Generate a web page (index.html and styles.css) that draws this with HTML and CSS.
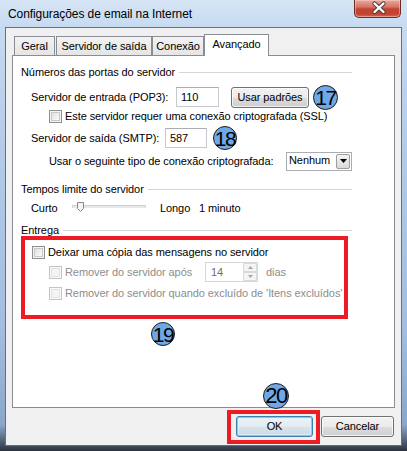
FILE: index.html
```html
<!DOCTYPE html>
<html lang="pt">
<head>
<meta charset="utf-8">
<title>Configurações de email na Internet</title>
<link rel="stylesheet" href="styles.css">
</head>
<body>
<div class="window">
  <div class="titlebar">
    <span class="title">Configurações de email na Internet</span>
    <div class="close">
      <svg width="47" height="18" viewBox="0 0 47 18">
        <path d="M19.5 4.5 L28.5 13 M28.5 4.5 L19.5 13" stroke="#4a3a3a" stroke-width="4.2" stroke-linecap="round"/>
        <path d="M19.5 4.5 L28.5 13 M28.5 4.5 L19.5 13" stroke="#ffffff" stroke-width="2.4" stroke-linecap="round"/>
      </svg>
    </div>
  </div>
  <div class="client">
    <div class="tabs">
      <div class="tab t1">Geral</div>
      <div class="tab t2">Servidor de saída</div>
      <div class="tab t3">Conexão</div>
      <div class="tab t4 sel">Avançado</div>
    </div>
    <div class="panel">
      <div class="head h1"><span>Números das portas do servidor</span></div>
      <div class="row r-pop">
        <span class="lbl w-pop">Servidor de entrada (POP3):</span>
        <div class="input in-pop">110</div>
        <div class="btn btn-std">Usar padrões</div>
        <div class="badge b17">17</div>
      </div>
      <div class="row r-ssl">
        <span class="cb"></span>
        <span class="lbl">Este servidor requer uma conexão criptografada (SSL)</span>
      </div>
      <div class="row r-smtp">
        <span class="lbl w-smtp">Servidor de saída (SMTP):</span>
        <div class="input in-smtp">587</div>
        <div class="badge b18">18</div>
      </div>
      <div class="row r-sel">
        <span class="lbl w-sel">Usar o seguinte tipo de conexão criptografada:</span>
        <div class="select">
          <span class="sel-text">Nenhum</span>
          <span class="sel-btn"><svg width="7" height="4" viewBox="0 0 7 4"><path d="M0 0 H7 L3.5 4 Z" fill="#000"/></svg></span>
        </div>
      </div>

      <div class="head h2"><span>Tempos limite do servidor</span></div>
      <div class="row r-time">
        <span class="lbl w-curto">Curto</span>
        <div class="slider">
          <span class="track"></span>
          <svg class="thumb" width="7" height="10" viewBox="0 0 7 10"><path d="M0.5 0.5 H6.5 V6.5 L3.5 9.5 L0.5 6.5 Z" fill="#f3f3f3" stroke="#8a8a8a"/></svg>
        </div>
        <span class="lbl w-longo">Longo</span>
        <span class="lbl">1 minuto</span>
      </div>

      <div class="head h3"><span>Entrega</span></div>
      <div class="redbox">
        <div class="row r-keep">
          <span class="cb"></span>
          <span class="lbl">Deixar uma cópia das mensagens no servidor</span>
        </div>
        <div class="row r-after">
          <span class="cb dis"></span>
          <span class="lbl dis-text w-after">Remover do servidor após</span>
          <div class="spin">
            <span class="spin-text">14</span>
            <span class="spin-btns">
              <span class="sb"><svg width="5" height="3" viewBox="0 0 5 3"><path d="M0 3 H5 L2.5 0 Z" fill="#a8a8a8"/></svg></span>
              <span class="sb"><svg width="5" height="3" viewBox="0 0 5 3"><path d="M0 0 H5 L2.5 3 Z" fill="#a8a8a8"/></svg></span>
            </span>
          </div>
          <span class="lbl dis-text dias">dias</span>
        </div>
        <div class="row r-when">
          <span class="cb dis"></span>
          <span class="lbl dis-text">Remover do servidor quando excluído de 'Itens excluídos'</span>
        </div>
      </div>

      <div class="badge b19">19</div>
      <div class="badge b20">20</div>
    </div>
    <div class="buttons">
      <div class="redbox-ok">
        <div class="btn btn-ok">OK</div>
      </div>
      <div class="btn btn-cancel">Cancelar</div>
    </div>
  </div>
</div>
</body>
</html>
```

FILE: styles.css
```css
html, body {
  margin: 0;
  padding: 0;
}
body {
  width: 407px;
  height: 451px;
  overflow: hidden;
  font-family: "Liberation Sans", Arial, sans-serif;
  font-size: 11px;
  letter-spacing: -0.08px;
  color: #000;
  background: linear-gradient(to bottom, #d6e5f5 0px, #c6daf0 28px, #b3cbe8 150px, #a2bde0 330px, #8aa6cb 425px, #3e4a5b 446px, #2b323d 451px);
}
.window {
  height: 451px;
  display: flex;
  flex-direction: column;
}

/* title bar */
.titlebar {
  height: 27px;
  display: flex;
  align-items: flex-start;
  padding: 0 6px 0 8px;
  flex: none;
}
.title {
  margin-top: 6px;
  line-height: 16px;
  font-size: 12px;
  color: #000;
}
.close {
  margin-left: auto;
  width: 47px;
  height: 18px;
  box-sizing: border-box;
  border: 1px solid #6b2c24;
  border-top: none;
  border-radius: 0 0 5px 5px;
  background: linear-gradient(to bottom, #e9a99e 0px, #d67265 7px, #c4412f 9px, #c3432f 14px, #d9765a 18px);
  box-shadow: inset 0 0 0 1px rgba(255, 220, 210, 0.45);
}
.close svg {
  display: block;
  margin-top: -1px;
}

/* client */
.client {
  flex: 1;
  margin: 0 5px 5px 5px;
  border: 1px solid #5d7189;
  background: #f0f0f0;
  display: flex;
  flex-direction: column;
}

/* tabs */
.tabs {
  display: flex;
  align-items: flex-end;
  height: 22px;
  margin-top: 6px;
  padding-left: 8px;
  flex: none;
}
.tab {
  height: 20px;
  box-sizing: border-box;
  border: 1px solid #898c95;
  border-bottom: none;
  background: linear-gradient(to bottom, #f3f3f3, #e4e4e4);
  line-height: 18px;
  text-align: center;
  color: #000;
}
.t1 { width: 41px; }
.t2 { width: 96px; margin-left: 1px; }
.t3 { width: 52px; }
.t4 { width: 65px; }
.tab.sel {
  height: 22px;
  background: #fff;
  position: relative;
  z-index: 2;
  line-height: 18px;
}

/* panel */
.panel {
  flex: 1;
  margin: -1px 6px 0 6px;
  border: 1px solid #898c95;
  background: #fff;
  position: relative;
  padding: 8px 0 0 8px;
  box-sizing: border-box;
  min-height: 0;
}
.head {
  display: flex;
  align-items: center;
  width: 331px;
  height: 16px;
  line-height: 16px;
}
.head::after {
  content: "";
  flex: 1;
  height: 0;
  border-top: 1px solid #d5d5d5;
  margin-left: 4px;
}
.row {
  display: flex;
  align-items: center;
}
.lbl {
  white-space: nowrap;
  line-height: 15px;
}
.r-pop { height: 24px; margin-top: 5px; padding-left: 10px; }
.w-pop { width: 145px; flex: none; }
.r-ssl { height: 14px; padding-left: 28px; }
.r-smtp { height: 24px; margin-top: 3px; padding-left: 10px; }
.w-smtp { width: 134px; flex: none; }
.r-sel { height: 20px; margin-top: 1px; padding-left: 28px; }
.w-sel { width: 237px; flex: none; }
.h2 { margin-top: 10px; }
.r-time { height: 16px; margin-top: 3px; padding-left: 10px; }
.w-curto { width: 41px; flex: none; }
.w-longo { width: 39px; flex: none; margin-left: 14px; }
.h3 { margin-top: 7px; height: 14px; }

/* inputs */
.input {
  height: 20px;
  box-sizing: border-box;
  border: 1px solid #c5c9d0;
  border-top-color: #abadb3;
  background: #fff;
  padding-left: 4px;
  line-height: 18px;
  flex: none;
}
.in-pop { width: 43px; }
.in-smtp { width: 42px; }

/* buttons */
.btn {
  height: 21px;
  box-sizing: border-box;
  border: 1px solid #707070;
  border-radius: 3px;
  background: linear-gradient(to bottom, #f2f2f2 0%, #ebebeb 50%, #dddddd 51%, #cfcfcf 100%);
  box-shadow: inset 0 0 0 1px rgba(255, 255, 255, 0.7);
  text-align: center;
  line-height: 19px;
  flex: none;
}
.btn-std {
  width: 78px;
  margin-left: 12px;
}
.btn-ok {
  width: 77px;
  border-color: #3c7fb1;
  background: linear-gradient(to bottom, #eef3f7 0%, #e3ebf1 50%, #d7e2ea 51%, #cfdbe5 100%);
  box-shadow: inset 0 0 0 1px #6fd3f5, inset 0 0 0 2px rgba(220, 245, 255, 0.6);
}
.btn-cancel {
  width: 73px;
  margin-top: 6px;
}

/* checkbox */
.cb {
  width: 13px;
  height: 13px;
  box-sizing: border-box;
  border: 1px solid #8e8f8f;
  background: linear-gradient(135deg, #d9d9d9 0%, #f2f2f2 60%, #fbfbfb 100%);
  box-shadow: inset 0 0 0 1px #f4f4f4, inset 0 0 0 2px #c8c8c8;
  margin-right: 3px;
  flex: none;
}
.cb.dis {
  border-color: #c4c4c4;
  background: #f4f4f4;
  box-shadow: inset 0 0 0 1px #fafafa, inset 0 0 0 2px #e2e2e2;
}
.dis-text { color: #8d8d8d; }

/* select */
.select {
  width: 66px;
  height: 19px;
  box-sizing: border-box;
  border: 1px solid #a9adb4;
  background: #fff;
  display: flex;
  align-items: stretch;
  flex: none;
}
.sel-text {
  flex: 1;
  padding-left: 2px;
  line-height: 15px;
}
.sel-btn {
  width: 14px;
  box-sizing: border-box;
  margin: 1px 1px 1px 0;
  border: 1px solid #9c9c9c;
  border-radius: 2px;
  background: linear-gradient(to bottom, #f4f4f4, #dadada);
  display: flex;
  align-items: center;
  justify-content: center;
}

/* slider */
.slider {
  width: 74px;
  height: 16px;
  position: relative;
  flex: none;
  display: flex;
  align-items: center;
}
.track {
  display: block;
  width: 74px;
  height: 3px;
  box-sizing: border-box;
  background: #e7eaea;
  border: 1px solid #d0d0d0;
  border-bottom-color: #e8e8e8;
  margin-top: -3px;
}
.thumb {
  position: absolute;
  left: 5px;
  top: 2px;
}

/* red box */
.redbox {
  width: 327px;
  height: 83px;
  box-sizing: border-box;
  border: 4px solid #ed1c24;
  margin-top: -1px;
  padding-top: 5px;
}
.r-keep { height: 14px; padding-left: 7px; }
.r-after { height: 20px; margin-top: 3px; padding-left: 24px; }
.w-after { width: 140px; flex: none; }
.r-when { height: 14px; margin-top: 4px; padding-left: 24px; }
.spin {
  width: 53px;
  height: 20px;
  box-sizing: border-box;
  border: 1px solid #d7d7d7;
  background: #fff;
  display: flex;
  flex: none;
}
.spin-text {
  flex: 1;
  padding-left: 5px;
  line-height: 18px;
  color: #6d6d6d;
}
.spin-btns {
  width: 14px;
  display: flex;
  flex-direction: column;
}
.sb {
  flex: 1;
  box-sizing: border-box;
  border: 1px solid #d9d9d9;
  border-radius: 1px;
  background: #f4f4f4;
  display: flex;
  align-items: center;
  justify-content: center;
}
.dias { margin-left: 8px; }

/* badges */
.badge {
  box-sizing: border-box;
  width: 24px;
  height: 24px;
  border-radius: 50%;
  border: 1px solid #1c1c1c;
  background: #6fa8e6;
  color: #000;
  font-family: "Liberation Sans", Arial, sans-serif;
  font-size: 21px;
  letter-spacing: -1.5px;
  display: flex;
  align-items: center;
  justify-content: center;
  line-height: 1;
  flex: none;
}
.b17 { width: 25px; height: 25px; margin-left: 4px; }
.b18 { margin-left: 6px; }
.b19 {
  position: absolute;
  left: 138px;
  top: 266px;
}
.b20 {
  position: absolute;
  left: 250px;
  top: 327px;
  width: 26px;
  height: 26px;
  font-size: 22px;
  z-index: 3;
}

/* bottom buttons */
.buttons {
  flex: none;
  height: 34px;
  margin: 2px 0 1px 0;
  padding-right: 7px;
  display: flex;
  justify-content: flex-end;
  align-items: flex-start;
  gap: 1px;
}
.redbox-ok {
  width: 93px;
  height: 34px;
  box-sizing: border-box;
  border: 4px solid #ed1c24;
  padding: 2px 0 0 5px;
}
```
